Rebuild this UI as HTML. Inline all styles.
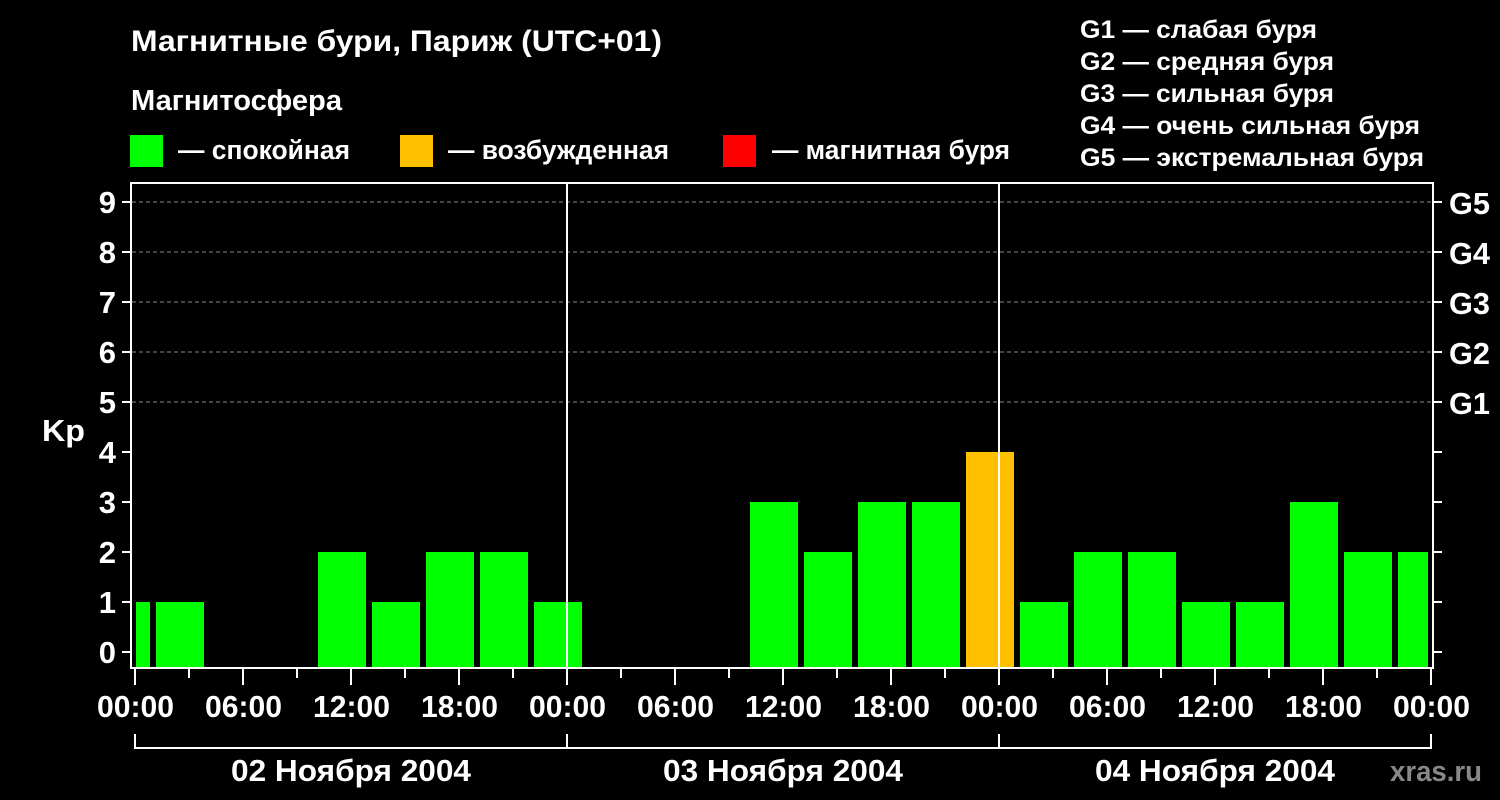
<!DOCTYPE html>
<html><head><meta charset="utf-8"><style>html,body{margin:0;padding:0;background:#000;}svg{display:block}</style></head>
<body>
<svg width="1500" height="800" viewBox="0 0 1500 800" xmlns="http://www.w3.org/2000/svg" font-family="Liberation Sans, Arial, sans-serif" font-weight="bold" fill="#fff">
<rect width="1500" height="800" fill="#000"/>
<text x="131" y="51" font-size="30" textLength="531" lengthAdjust="spacingAndGlyphs">Магнитные бури, Париж (UTC+01)</text>
<text x="131" y="110" font-size="29" textLength="211" lengthAdjust="spacingAndGlyphs">Магнитосфера</text>
<rect x="130" y="135" width="33" height="32" fill="#00ff00"/>
<text x="178" y="159" font-size="27" textLength="172" lengthAdjust="spacingAndGlyphs">— спокойная</text>
<rect x="400" y="135" width="33" height="32" fill="#ffc000"/>
<text x="448" y="159" font-size="27" textLength="221" lengthAdjust="spacingAndGlyphs">— возбужденная</text>
<rect x="723" y="135" width="33" height="32" fill="#ff0000"/>
<text x="772" y="159" font-size="27" textLength="238" lengthAdjust="spacingAndGlyphs">— магнитная буря</text>
<g font-size="25">
<text x="1080" y="38" textLength="237" lengthAdjust="spacingAndGlyphs">G1 — слабая буря</text>
<text x="1080" y="70" textLength="254" lengthAdjust="spacingAndGlyphs">G2 — средняя буря</text>
<text x="1080" y="102" textLength="254" lengthAdjust="spacingAndGlyphs">G3 — сильная буря</text>
<text x="1080" y="134" textLength="340" lengthAdjust="spacingAndGlyphs">G4 — очень сильная буря</text>
<text x="1080" y="166" textLength="344" lengthAdjust="spacingAndGlyphs">G5 — экстремальная буря</text>
</g>
<g stroke="#888" stroke-width="1" stroke-dasharray="4,3">
<line x1="132" y1="202" x2="1432" y2="202"/><line x1="132" y1="252" x2="1432" y2="252"/><line x1="132" y1="302" x2="1432" y2="302"/><line x1="132" y1="352" x2="1432" y2="352"/><line x1="132" y1="402" x2="1432" y2="402"/>
</g>
<g fill="#00ff00">
<rect x="136" y="602" width="14" height="66"/>
<rect x="156" y="602" width="48" height="66"/>
<rect x="318" y="552" width="48" height="116"/>
<rect x="372" y="602" width="48" height="66"/>
<rect x="426" y="552" width="48" height="116"/>
<rect x="480" y="552" width="48" height="116"/>
<rect x="534" y="602" width="48" height="66"/>
<rect x="750" y="502" width="48" height="166"/>
<rect x="804" y="552" width="48" height="116"/>
<rect x="858" y="502" width="48" height="166"/>
<rect x="912" y="502" width="48" height="166"/>
<rect x="1020" y="602" width="48" height="66"/>
<rect x="1074" y="552" width="48" height="116"/>
<rect x="1128" y="552" width="48" height="116"/>
<rect x="1182" y="602" width="48" height="66"/>
<rect x="1236" y="602" width="48" height="66"/>
<rect x="1290" y="502" width="48" height="166"/>
<rect x="1344" y="552" width="48" height="116"/>
<rect x="1398" y="552" width="30" height="116"/>
</g>
<rect x="966" y="452" width="48" height="216" fill="#ffc000"/>
<g stroke="#fff" stroke-width="2" fill="none">
<rect x="131" y="183" width="1302" height="485"/>
<line x1="567" y1="183" x2="567" y2="668"/>
<line x1="999" y1="183" x2="999" y2="668"/>
<path d="M122 202H131M122 252H131M122 302H131M122 352H131M122 402H131M122 452H131M122 502H131M122 552H131M122 602H131M122 652H131"/>
<path d="M1433 202H1442M1433 252H1442M1433 302H1442M1433 352H1442M1433 402H1442M1433 452H1442M1433 502H1442M1433 552H1442M1433 602H1442M1433 652H1442"/>
<path d="M135 669V685M243 669V685M351 669V685M459 669V685M567 669V685M675 669V685M783 669V685M891 669V685M999 669V685M1107 669V685M1215 669V685M1323 669V685M1431 669V685"/>
<path d="M189 669V678M297 669V678M405 669V678M513 669V678M621 669V678M729 669V678M837 669V678M945 669V678M1053 669V678M1161 669V678M1269 669V678M1377 669V678"/>
<path d="M135 734V748H1431V734M567 734V748M999 734V748"/>
</g>
<g font-size="31" text-anchor="end">
<text x="116" y="213">9</text><text x="116" y="263">8</text><text x="116" y="313">7</text><text x="116" y="363">6</text><text x="116" y="413">5</text><text x="116" y="463">4</text><text x="116" y="513">3</text><text x="116" y="563">2</text><text x="116" y="613">1</text><text x="116" y="663">0</text>
</g>
<text x="42" y="441" font-size="31" textLength="43" lengthAdjust="spacingAndGlyphs">Kp</text>
<g font-size="31">
<text x="1449" y="214" textLength="41" lengthAdjust="spacingAndGlyphs">G5</text><text x="1449" y="264" textLength="41" lengthAdjust="spacingAndGlyphs">G4</text><text x="1449" y="314" textLength="41" lengthAdjust="spacingAndGlyphs">G3</text><text x="1449" y="364" textLength="41" lengthAdjust="spacingAndGlyphs">G2</text><text x="1449" y="414" textLength="41" lengthAdjust="spacingAndGlyphs">G1</text>
</g>
<g font-size="31">
<text x="97" y="717" textLength="77" lengthAdjust="spacingAndGlyphs">00:00</text><text x="205" y="717" textLength="77" lengthAdjust="spacingAndGlyphs">06:00</text><text x="313" y="717" textLength="77" lengthAdjust="spacingAndGlyphs">12:00</text><text x="421" y="717" textLength="77" lengthAdjust="spacingAndGlyphs">18:00</text><text x="529" y="717" textLength="77" lengthAdjust="spacingAndGlyphs">00:00</text><text x="637" y="717" textLength="77" lengthAdjust="spacingAndGlyphs">06:00</text><text x="745" y="717" textLength="77" lengthAdjust="spacingAndGlyphs">12:00</text><text x="853" y="717" textLength="77" lengthAdjust="spacingAndGlyphs">18:00</text><text x="961" y="717" textLength="77" lengthAdjust="spacingAndGlyphs">00:00</text><text x="1069" y="717" textLength="77" lengthAdjust="spacingAndGlyphs">06:00</text><text x="1177" y="717" textLength="77" lengthAdjust="spacingAndGlyphs">12:00</text><text x="1285" y="717" textLength="77" lengthAdjust="spacingAndGlyphs">18:00</text><text x="1393" y="717" textLength="77" lengthAdjust="spacingAndGlyphs">00:00</text>
</g>
<g font-size="31">
<text x="231" y="781" textLength="240" lengthAdjust="spacingAndGlyphs">02 Ноября 2004</text>
<text x="663" y="781" textLength="240" lengthAdjust="spacingAndGlyphs">03 Ноября 2004</text>
<text x="1095" y="781" textLength="240" lengthAdjust="spacingAndGlyphs">04 Ноября 2004</text>
</g>
<text x="1390" y="781" font-size="29" fill="#888" textLength="92" lengthAdjust="spacingAndGlyphs">xras.ru</text>
</svg>
</body></html>
